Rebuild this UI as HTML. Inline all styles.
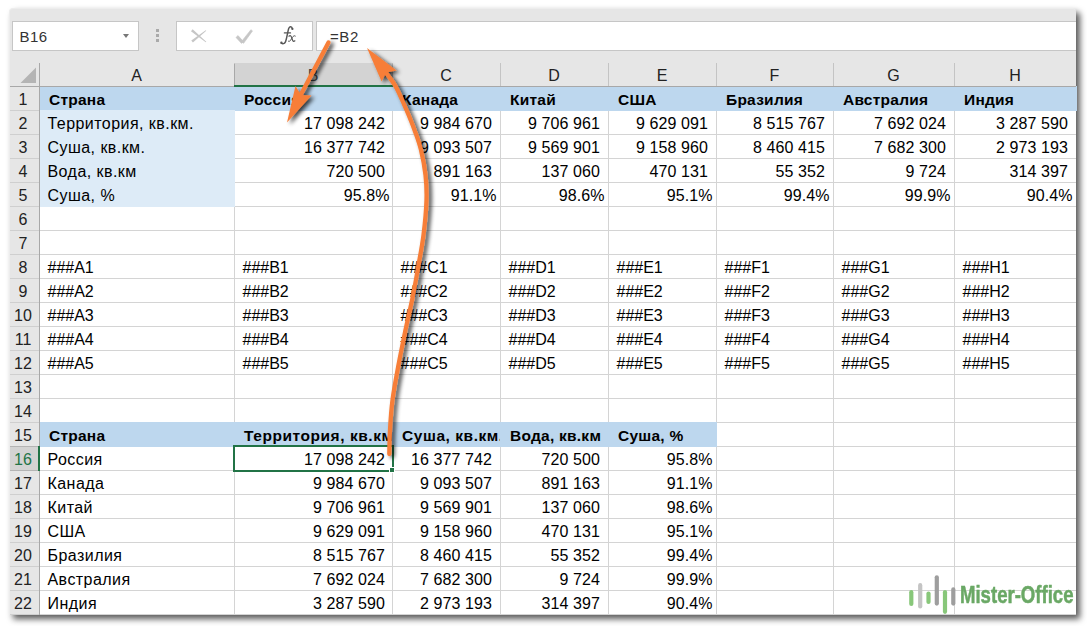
<!DOCTYPE html>
<html><head><meta charset="utf-8"><style>
html,body{margin:0;padding:0}
body{width:1087px;height:626px;background:#fff;position:relative;overflow:hidden;font-family:"Liberation Sans", sans-serif}
.a{position:absolute}
.t{position:absolute;white-space:nowrap;overflow:hidden;font-size:16px;line-height:24px;color:#000}
.b{font-weight:bold;font-size:15.5px;letter-spacing:0.25px}
.r{text-align:right}
</style></head><body>

<div class="a" style="left:9px;top:8px;width:1066px;height:606px;background:#e6e6e6;border-left:1px solid #ededed;border-top:1px solid #ededed;border-radius:4px 4px 0 0;box-shadow:4px 4px 6px rgba(0,0,0,0.65)"></div>
<div class="a" style="left:12px;top:21px;width:125px;height:28px;background:#fff;border:1px solid #c6c6c6"></div>
<div class="t" style="left:19.5px;top:24.6px;font-size:15px;letter-spacing:0.5px;color:#333">B16</div>
<div class="a" style="left:123px;top:34px;width:0;height:0;border-left:3.6px solid transparent;border-right:3.6px solid transparent;border-top:4.2px solid #777"></div>
<div class="a" style="left:156px;top:29px;width:3px;height:3px;background:#aaa"></div>
<div class="a" style="left:156px;top:34px;width:3px;height:3px;background:#aaa"></div>
<div class="a" style="left:156px;top:39px;width:3px;height:3px;background:#aaa"></div>
<div class="a" style="left:176px;top:21px;width:135px;height:28px;background:#fff;border:1px solid #c6c6c6"></div>
<svg class="a" style="left:0;top:0" width="300" height="60"><path d="M190.97 31.30 L205.71 42.35 L206.29 41.65 L192.63 29.30 Z M192.91 42.52 L206.28 30.85 L205.72 30.15 L191.29 40.48 Z" fill="#c6c6c6"/><path d="M235.97 37.45 L241.54 43.38 L243.46 41.62 L238.03 35.55 Z M243.62 43.34 L252.50 30.90 L250.90 29.70 L241.38 41.66 Z" fill="#c6c6c6" stroke="#c6c6c6" stroke-width="0.6" stroke-linejoin="round"/></svg>
<svg class="a" style="left:0;top:0" width="320" height="60"><g fill="none" stroke="#575757" stroke-linecap="round"><path d="M292.3 28.6 C291.8 26.4 289.8 26.2 288.8 28.3 C287.9 30.4 286.6 39.5 285.3 42.2 C284.5 43.8 282.6 44.1 281.6 43.2" stroke-width="1.5"/><path d="M284.3 32.9 L290.6 32.9" stroke-width="1.1"/><path d="M288.9 36.2 C290.2 35.1 291 35.6 291.6 37.4 L292.6 40.2 C293.1 41.6 293.9 41.7 294.9 40.8" stroke-width="1.2"/><path d="M295.3 36 C294.4 35.3 293.4 35.8 292.3 37.6 L290.6 40.2 C290 41.3 289.3 41.6 288.4 41.2" stroke-width="1.0"/></g><circle cx="292.4" cy="28.9" r="1.1" fill="#575757"/><circle cx="281.4" cy="42.8" r="1.2" fill="#575757"/></svg>
<div class="a" style="left:316px;top:21px;width:759px;height:28px;background:#fff;border:1px solid #c6c6c6;border-right:none"></div>
<div class="t" style="left:330px;top:24.6px;font-size:15px;letter-spacing:0.6px;color:#333">=B2</div>
<div class="a" style="left:10px;top:63px;width:1066px;height:24px;background:#e6e6e6"></div>
<div class="a" style="left:39px;top:87px;width:1037px;height:528px;background:#fff"></div>
<svg class="a" style="left:0;top:0" width="1087" height="626">
<line x1="39" x2="1076" y1="110.5" y2="110.5" stroke="#d4d4d4" stroke-width="1"/>
<line x1="39" x2="1076" y1="134.5" y2="134.5" stroke="#d4d4d4" stroke-width="1"/>
<line x1="39" x2="1076" y1="158.5" y2="158.5" stroke="#d4d4d4" stroke-width="1"/>
<line x1="39" x2="1076" y1="182.5" y2="182.5" stroke="#d4d4d4" stroke-width="1"/>
<line x1="39" x2="1076" y1="206.5" y2="206.5" stroke="#d4d4d4" stroke-width="1"/>
<line x1="39" x2="1076" y1="230.5" y2="230.5" stroke="#d4d4d4" stroke-width="1"/>
<line x1="39" x2="1076" y1="254.5" y2="254.5" stroke="#d4d4d4" stroke-width="1"/>
<line x1="39" x2="1076" y1="278.5" y2="278.5" stroke="#d4d4d4" stroke-width="1"/>
<line x1="39" x2="1076" y1="302.5" y2="302.5" stroke="#d4d4d4" stroke-width="1"/>
<line x1="39" x2="1076" y1="326.5" y2="326.5" stroke="#d4d4d4" stroke-width="1"/>
<line x1="39" x2="1076" y1="350.5" y2="350.5" stroke="#d4d4d4" stroke-width="1"/>
<line x1="39" x2="1076" y1="374.5" y2="374.5" stroke="#d4d4d4" stroke-width="1"/>
<line x1="39" x2="1076" y1="398.5" y2="398.5" stroke="#d4d4d4" stroke-width="1"/>
<line x1="39" x2="1076" y1="422.5" y2="422.5" stroke="#d4d4d4" stroke-width="1"/>
<line x1="39" x2="1076" y1="446.5" y2="446.5" stroke="#d4d4d4" stroke-width="1"/>
<line x1="39" x2="1076" y1="470.5" y2="470.5" stroke="#d4d4d4" stroke-width="1"/>
<line x1="39" x2="1076" y1="494.5" y2="494.5" stroke="#d4d4d4" stroke-width="1"/>
<line x1="39" x2="1076" y1="518.5" y2="518.5" stroke="#d4d4d4" stroke-width="1"/>
<line x1="39" x2="1076" y1="542.5" y2="542.5" stroke="#d4d4d4" stroke-width="1"/>
<line x1="39" x2="1076" y1="566.5" y2="566.5" stroke="#d4d4d4" stroke-width="1"/>
<line x1="39" x2="1076" y1="590.5" y2="590.5" stroke="#d4d4d4" stroke-width="1"/>
<line x1="39" x2="1076" y1="614.5" y2="614.5" stroke="#d4d4d4" stroke-width="1"/>
<line x1="234.5" x2="234.5" y1="87" y2="615" stroke="#d4d4d4" stroke-width="1"/>
<line x1="392.5" x2="392.5" y1="87" y2="615" stroke="#d4d4d4" stroke-width="1"/>
<line x1="500.5" x2="500.5" y1="87" y2="615" stroke="#d4d4d4" stroke-width="1"/>
<line x1="608.5" x2="608.5" y1="87" y2="615" stroke="#d4d4d4" stroke-width="1"/>
<line x1="716.5" x2="716.5" y1="87" y2="615" stroke="#d4d4d4" stroke-width="1"/>
<line x1="833.5" x2="833.5" y1="87" y2="615" stroke="#d4d4d4" stroke-width="1"/>
<line x1="954.5" x2="954.5" y1="87" y2="615" stroke="#d4d4d4" stroke-width="1"/>
<rect x="40" y="86" width="1037" height="25" fill="#bdd7ee"/>
<rect x="40" y="110" width="195" height="97" fill="#ddebf7"/>
<rect x="40" y="422" width="677" height="25" fill="#bdd7ee"/>
<rect x="10" y="87" width="29" height="528" fill="#e6e6e6"/>
<line x1="10" x2="39" y1="110.5" y2="110.5" stroke="#cfcfcf" stroke-width="1"/>
<line x1="10" x2="39" y1="134.5" y2="134.5" stroke="#cfcfcf" stroke-width="1"/>
<line x1="10" x2="39" y1="158.5" y2="158.5" stroke="#cfcfcf" stroke-width="1"/>
<line x1="10" x2="39" y1="182.5" y2="182.5" stroke="#cfcfcf" stroke-width="1"/>
<line x1="10" x2="39" y1="206.5" y2="206.5" stroke="#cfcfcf" stroke-width="1"/>
<line x1="10" x2="39" y1="230.5" y2="230.5" stroke="#cfcfcf" stroke-width="1"/>
<line x1="10" x2="39" y1="254.5" y2="254.5" stroke="#cfcfcf" stroke-width="1"/>
<line x1="10" x2="39" y1="278.5" y2="278.5" stroke="#cfcfcf" stroke-width="1"/>
<line x1="10" x2="39" y1="302.5" y2="302.5" stroke="#cfcfcf" stroke-width="1"/>
<line x1="10" x2="39" y1="326.5" y2="326.5" stroke="#cfcfcf" stroke-width="1"/>
<line x1="10" x2="39" y1="350.5" y2="350.5" stroke="#cfcfcf" stroke-width="1"/>
<line x1="10" x2="39" y1="374.5" y2="374.5" stroke="#cfcfcf" stroke-width="1"/>
<line x1="10" x2="39" y1="398.5" y2="398.5" stroke="#cfcfcf" stroke-width="1"/>
<line x1="10" x2="39" y1="422.5" y2="422.5" stroke="#cfcfcf" stroke-width="1"/>
<line x1="10" x2="39" y1="446.5" y2="446.5" stroke="#cfcfcf" stroke-width="1"/>
<line x1="10" x2="39" y1="470.5" y2="470.5" stroke="#cfcfcf" stroke-width="1"/>
<line x1="10" x2="39" y1="494.5" y2="494.5" stroke="#cfcfcf" stroke-width="1"/>
<line x1="10" x2="39" y1="518.5" y2="518.5" stroke="#cfcfcf" stroke-width="1"/>
<line x1="10" x2="39" y1="542.5" y2="542.5" stroke="#cfcfcf" stroke-width="1"/>
<line x1="10" x2="39" y1="566.5" y2="566.5" stroke="#cfcfcf" stroke-width="1"/>
<line x1="10" x2="39" y1="590.5" y2="590.5" stroke="#cfcfcf" stroke-width="1"/>
<line x1="10" x2="39" y1="614.5" y2="614.5" stroke="#cfcfcf" stroke-width="1"/>
<line x1="39.5" x2="39.5" y1="63" y2="615" stroke="#a8a8a8" stroke-width="1"/>
<line x1="234.5" x2="234.5" y1="63" y2="86" stroke="#c4c4c4" stroke-width="1"/>
<line x1="392.5" x2="392.5" y1="63" y2="86" stroke="#c4c4c4" stroke-width="1"/>
<line x1="500.5" x2="500.5" y1="63" y2="86" stroke="#c4c4c4" stroke-width="1"/>
<line x1="608.5" x2="608.5" y1="63" y2="86" stroke="#c4c4c4" stroke-width="1"/>
<line x1="716.5" x2="716.5" y1="63" y2="86" stroke="#c4c4c4" stroke-width="1"/>
<line x1="833.5" x2="833.5" y1="63" y2="86" stroke="#c4c4c4" stroke-width="1"/>
<line x1="954.5" x2="954.5" y1="63" y2="86" stroke="#c4c4c4" stroke-width="1"/>
<line x1="10" x2="1076" y1="86.5" y2="86.5" stroke="#a8a8a8" stroke-width="1"/>
<rect x="235" y="63" width="157" height="23" fill="#d3d3d3"/>
<rect x="234" y="64" width="1" height="21" fill="#a8a8a8"/>
<rect x="392" y="64" width="1" height="21" fill="#b4b4b4"/>
<rect x="234" y="85" width="159" height="2" fill="#217346"/>
<rect x="10" y="447" width="28" height="23" fill="#d3d3d3"/>
<line x1="10" x2="39" y1="446.5" y2="446.5" stroke="#b4b4b4" stroke-width="1"/>
<line x1="10" x2="39" y1="470.5" y2="470.5" stroke="#b4b4b4" stroke-width="1"/>
<rect x="38" y="446" width="2" height="25" fill="#217346"/>
<path d="M20.5 83L36 83L36 67.5Z" fill="#b4b4b4"/>
<rect x="234" y="446" width="159" height="25" fill="none" stroke="#217346" stroke-width="2"/>
<rect x="389.5" y="467.5" width="5" height="5" fill="#217346" stroke="#fff" stroke-width="1"/>
</svg>
<div class="t" style="left:39px;top:63.5px;width:195px;text-align:center;font-size:16px;color:#222">A</div>
<div class="t" style="left:234px;top:63.5px;width:158px;text-align:center;font-size:16px;color:#444">B</div>
<div class="t" style="left:392px;top:63.5px;width:108px;text-align:center;font-size:16px;color:#222">C</div>
<div class="t" style="left:500px;top:63.5px;width:108px;text-align:center;font-size:16px;color:#222">D</div>
<div class="t" style="left:608px;top:63.5px;width:108px;text-align:center;font-size:16px;color:#222">E</div>
<div class="t" style="left:716px;top:63.5px;width:117px;text-align:center;font-size:16px;color:#222">F</div>
<div class="t" style="left:833px;top:63.5px;width:121px;text-align:center;font-size:16px;color:#222">G</div>
<div class="t" style="left:954px;top:63.5px;width:122px;text-align:center;font-size:16px;color:#222">H</div>
<div class="t" style="left:8px;top:88.2px;width:30px;text-align:center;font-size:16px;color:#222">1</div>
<div class="t" style="left:8px;top:112.2px;width:30px;text-align:center;font-size:16px;color:#222">2</div>
<div class="t" style="left:8px;top:136.2px;width:30px;text-align:center;font-size:16px;color:#222">3</div>
<div class="t" style="left:8px;top:160.2px;width:30px;text-align:center;font-size:16px;color:#222">4</div>
<div class="t" style="left:8px;top:184.2px;width:30px;text-align:center;font-size:16px;color:#222">5</div>
<div class="t" style="left:8px;top:208.2px;width:30px;text-align:center;font-size:16px;color:#222">6</div>
<div class="t" style="left:8px;top:232.2px;width:30px;text-align:center;font-size:16px;color:#222">7</div>
<div class="t" style="left:8px;top:256.2px;width:30px;text-align:center;font-size:16px;color:#222">8</div>
<div class="t" style="left:8px;top:280.2px;width:30px;text-align:center;font-size:16px;color:#222">9</div>
<div class="t" style="left:8px;top:304.2px;width:30px;text-align:center;font-size:16px;color:#222">10</div>
<div class="t" style="left:8px;top:328.2px;width:30px;text-align:center;font-size:16px;color:#222">11</div>
<div class="t" style="left:8px;top:352.2px;width:30px;text-align:center;font-size:16px;color:#222">12</div>
<div class="t" style="left:8px;top:376.2px;width:30px;text-align:center;font-size:16px;color:#222">13</div>
<div class="t" style="left:8px;top:400.2px;width:30px;text-align:center;font-size:16px;color:#222">14</div>
<div class="t" style="left:8px;top:424.2px;width:30px;text-align:center;font-size:16px;color:#222">15</div>
<div class="t" style="left:8px;top:448.2px;width:30px;text-align:center;font-size:16px;color:#217346">16</div>
<div class="t" style="left:8px;top:472.2px;width:30px;text-align:center;font-size:16px;color:#222">17</div>
<div class="t" style="left:8px;top:496.2px;width:30px;text-align:center;font-size:16px;color:#222">18</div>
<div class="t" style="left:8px;top:520.2px;width:30px;text-align:center;font-size:16px;color:#222">19</div>
<div class="t" style="left:8px;top:544.2px;width:30px;text-align:center;font-size:16px;color:#222">20</div>
<div class="t" style="left:8px;top:568.2px;width:30px;text-align:center;font-size:16px;color:#222">21</div>
<div class="t" style="left:8px;top:592.2px;width:30px;text-align:center;font-size:16px;color:#222">22</div>
<div class="t b" style="left:39px;top:87.7px;width:195px;padding-left:10px;box-sizing:border-box;">Страна</div>
<div class="t b" style="left:234px;top:87.7px;width:158px;padding-left:10px;box-sizing:border-box;">Россия</div>
<div class="t b" style="left:392px;top:87.7px;width:108px;padding-left:10px;box-sizing:border-box;">Канада</div>
<div class="t b" style="left:500px;top:87.7px;width:108px;padding-left:10px;box-sizing:border-box;">Китай</div>
<div class="t b" style="left:608px;top:87.7px;width:108px;padding-left:10px;box-sizing:border-box;">США</div>
<div class="t b" style="left:716px;top:87.7px;width:117px;padding-left:10px;box-sizing:border-box;">Бразилия</div>
<div class="t b" style="left:833px;top:87.7px;width:121px;padding-left:10px;box-sizing:border-box;">Австралия</div>
<div class="t b" style="left:954px;top:87.7px;width:400px;padding-left:10px;box-sizing:border-box;">Индия</div>
<div class="t" style="left:39px;top:112.2px;width:195px;padding-left:8.5px;box-sizing:border-box;letter-spacing:0.45px;">Территория, кв.км.</div>
<div class="t r" style="left:234px;top:112.2px;width:151.0px;letter-spacing:0.1px">17 098 242</div>
<div class="t r" style="left:392px;top:112.2px;width:100.0px;letter-spacing:0.1px">9 984 670</div>
<div class="t r" style="left:500px;top:112.2px;width:100.0px;letter-spacing:0.1px">9 706 961</div>
<div class="t r" style="left:608px;top:112.2px;width:100.0px;letter-spacing:0.1px">9 629 091</div>
<div class="t r" style="left:716px;top:112.2px;width:109.0px;letter-spacing:0.1px">8 515 767</div>
<div class="t r" style="left:833px;top:112.2px;width:113.0px;letter-spacing:0.1px">7 692 024</div>
<div class="t r" style="left:954px;top:112.2px;width:114.0px;letter-spacing:0.1px">3 287 590</div>
<div class="t" style="left:39px;top:136.2px;width:195px;padding-left:8.5px;box-sizing:border-box;letter-spacing:0.45px;">Суша, кв.км.</div>
<div class="t r" style="left:234px;top:136.2px;width:151.0px;letter-spacing:0.1px">16 377 742</div>
<div class="t r" style="left:392px;top:136.2px;width:100.0px;letter-spacing:0.1px">9 093 507</div>
<div class="t r" style="left:500px;top:136.2px;width:100.0px;letter-spacing:0.1px">9 569 901</div>
<div class="t r" style="left:608px;top:136.2px;width:100.0px;letter-spacing:0.1px">9 158 960</div>
<div class="t r" style="left:716px;top:136.2px;width:109.0px;letter-spacing:0.1px">8 460 415</div>
<div class="t r" style="left:833px;top:136.2px;width:113.0px;letter-spacing:0.1px">7 682 300</div>
<div class="t r" style="left:954px;top:136.2px;width:114.0px;letter-spacing:0.1px">2 973 193</div>
<div class="t" style="left:39px;top:160.2px;width:195px;padding-left:8.5px;box-sizing:border-box;letter-spacing:0.45px;">Вода, кв.км</div>
<div class="t r" style="left:234px;top:160.2px;width:151.0px;letter-spacing:0.1px">720 500</div>
<div class="t r" style="left:392px;top:160.2px;width:100.0px;letter-spacing:0.1px">891 163</div>
<div class="t r" style="left:500px;top:160.2px;width:100.0px;letter-spacing:0.1px">137 060</div>
<div class="t r" style="left:608px;top:160.2px;width:100.0px;letter-spacing:0.1px">470 131</div>
<div class="t r" style="left:716px;top:160.2px;width:109.0px;letter-spacing:0.1px">55 352</div>
<div class="t r" style="left:833px;top:160.2px;width:113.0px;letter-spacing:0.1px">9 724</div>
<div class="t r" style="left:954px;top:160.2px;width:114.0px;letter-spacing:0.1px">314 397</div>
<div class="t" style="left:39px;top:184.2px;width:195px;padding-left:8.5px;box-sizing:border-box;letter-spacing:0.45px;">Суша, %</div>
<div class="t r" style="left:234px;top:184.2px;width:155.7px;letter-spacing:0.1px">95.8%</div>
<div class="t r" style="left:392px;top:184.2px;width:104.7px;letter-spacing:0.1px">91.1%</div>
<div class="t r" style="left:500px;top:184.2px;width:104.7px;letter-spacing:0.1px">98.6%</div>
<div class="t r" style="left:608px;top:184.2px;width:104.7px;letter-spacing:0.1px">95.1%</div>
<div class="t r" style="left:716px;top:184.2px;width:113.7px;letter-spacing:0.1px">99.4%</div>
<div class="t r" style="left:833px;top:184.2px;width:117.7px;letter-spacing:0.1px">99.9%</div>
<div class="t r" style="left:954px;top:184.2px;width:118.7px;letter-spacing:0.1px">90.4%</div>
<div class="t" style="left:39px;top:256.2px;width:195px;padding-left:8.5px;box-sizing:border-box;letter-spacing:0px;">###A1</div>
<div class="t" style="left:234px;top:256.2px;width:158px;padding-left:8.5px;box-sizing:border-box;letter-spacing:0px;">###B1</div>
<div class="t" style="left:392px;top:256.2px;width:108px;padding-left:8.5px;box-sizing:border-box;letter-spacing:0px;">###C1</div>
<div class="t" style="left:500px;top:256.2px;width:108px;padding-left:8.5px;box-sizing:border-box;letter-spacing:0px;">###D1</div>
<div class="t" style="left:608px;top:256.2px;width:108px;padding-left:8.5px;box-sizing:border-box;letter-spacing:0px;">###E1</div>
<div class="t" style="left:716px;top:256.2px;width:117px;padding-left:8.5px;box-sizing:border-box;letter-spacing:0px;">###F1</div>
<div class="t" style="left:833px;top:256.2px;width:121px;padding-left:8.5px;box-sizing:border-box;letter-spacing:0px;">###G1</div>
<div class="t" style="left:954px;top:256.2px;width:400px;padding-left:8.5px;box-sizing:border-box;letter-spacing:0px;">###H1</div>
<div class="t" style="left:39px;top:280.2px;width:195px;padding-left:8.5px;box-sizing:border-box;letter-spacing:0px;">###A2</div>
<div class="t" style="left:234px;top:280.2px;width:158px;padding-left:8.5px;box-sizing:border-box;letter-spacing:0px;">###B2</div>
<div class="t" style="left:392px;top:280.2px;width:108px;padding-left:8.5px;box-sizing:border-box;letter-spacing:0px;">###C2</div>
<div class="t" style="left:500px;top:280.2px;width:108px;padding-left:8.5px;box-sizing:border-box;letter-spacing:0px;">###D2</div>
<div class="t" style="left:608px;top:280.2px;width:108px;padding-left:8.5px;box-sizing:border-box;letter-spacing:0px;">###E2</div>
<div class="t" style="left:716px;top:280.2px;width:117px;padding-left:8.5px;box-sizing:border-box;letter-spacing:0px;">###F2</div>
<div class="t" style="left:833px;top:280.2px;width:121px;padding-left:8.5px;box-sizing:border-box;letter-spacing:0px;">###G2</div>
<div class="t" style="left:954px;top:280.2px;width:400px;padding-left:8.5px;box-sizing:border-box;letter-spacing:0px;">###H2</div>
<div class="t" style="left:39px;top:304.2px;width:195px;padding-left:8.5px;box-sizing:border-box;letter-spacing:0px;">###A3</div>
<div class="t" style="left:234px;top:304.2px;width:158px;padding-left:8.5px;box-sizing:border-box;letter-spacing:0px;">###B3</div>
<div class="t" style="left:392px;top:304.2px;width:108px;padding-left:8.5px;box-sizing:border-box;letter-spacing:0px;">###C3</div>
<div class="t" style="left:500px;top:304.2px;width:108px;padding-left:8.5px;box-sizing:border-box;letter-spacing:0px;">###D3</div>
<div class="t" style="left:608px;top:304.2px;width:108px;padding-left:8.5px;box-sizing:border-box;letter-spacing:0px;">###E3</div>
<div class="t" style="left:716px;top:304.2px;width:117px;padding-left:8.5px;box-sizing:border-box;letter-spacing:0px;">###F3</div>
<div class="t" style="left:833px;top:304.2px;width:121px;padding-left:8.5px;box-sizing:border-box;letter-spacing:0px;">###G3</div>
<div class="t" style="left:954px;top:304.2px;width:400px;padding-left:8.5px;box-sizing:border-box;letter-spacing:0px;">###H3</div>
<div class="t" style="left:39px;top:328.2px;width:195px;padding-left:8.5px;box-sizing:border-box;letter-spacing:0px;">###A4</div>
<div class="t" style="left:234px;top:328.2px;width:158px;padding-left:8.5px;box-sizing:border-box;letter-spacing:0px;">###B4</div>
<div class="t" style="left:392px;top:328.2px;width:108px;padding-left:8.5px;box-sizing:border-box;letter-spacing:0px;">###C4</div>
<div class="t" style="left:500px;top:328.2px;width:108px;padding-left:8.5px;box-sizing:border-box;letter-spacing:0px;">###D4</div>
<div class="t" style="left:608px;top:328.2px;width:108px;padding-left:8.5px;box-sizing:border-box;letter-spacing:0px;">###E4</div>
<div class="t" style="left:716px;top:328.2px;width:117px;padding-left:8.5px;box-sizing:border-box;letter-spacing:0px;">###F4</div>
<div class="t" style="left:833px;top:328.2px;width:121px;padding-left:8.5px;box-sizing:border-box;letter-spacing:0px;">###G4</div>
<div class="t" style="left:954px;top:328.2px;width:400px;padding-left:8.5px;box-sizing:border-box;letter-spacing:0px;">###H4</div>
<div class="t" style="left:39px;top:352.2px;width:195px;padding-left:8.5px;box-sizing:border-box;letter-spacing:0px;">###A5</div>
<div class="t" style="left:234px;top:352.2px;width:158px;padding-left:8.5px;box-sizing:border-box;letter-spacing:0px;">###B5</div>
<div class="t" style="left:392px;top:352.2px;width:108px;padding-left:8.5px;box-sizing:border-box;letter-spacing:0px;">###C5</div>
<div class="t" style="left:500px;top:352.2px;width:108px;padding-left:8.5px;box-sizing:border-box;letter-spacing:0px;">###D5</div>
<div class="t" style="left:608px;top:352.2px;width:108px;padding-left:8.5px;box-sizing:border-box;letter-spacing:0px;">###E5</div>
<div class="t" style="left:716px;top:352.2px;width:117px;padding-left:8.5px;box-sizing:border-box;letter-spacing:0px;">###F5</div>
<div class="t" style="left:833px;top:352.2px;width:121px;padding-left:8.5px;box-sizing:border-box;letter-spacing:0px;">###G5</div>
<div class="t" style="left:954px;top:352.2px;width:400px;padding-left:8.5px;box-sizing:border-box;letter-spacing:0px;">###H5</div>
<div class="t b" style="left:39px;top:423.7px;width:195px;padding-left:10px;box-sizing:border-box;">Страна</div>
<div class="t b" style="left:234px;top:423.7px;width:158px;padding-left:10px;box-sizing:border-box;letter-spacing:0.55px;">Территория, кв.км</div>
<div class="t b" style="left:392px;top:423.7px;width:108px;padding-left:10px;box-sizing:border-box;letter-spacing:0.55px;">Суша, кв.км.</div>
<div class="t b" style="left:500px;top:423.7px;width:108px;padding-left:10px;box-sizing:border-box;">Вода, кв.км</div>
<div class="t b" style="left:608px;top:423.7px;width:400px;padding-left:10px;box-sizing:border-box;">Суша, %</div>
<div class="t" style="left:39px;top:448.2px;width:195px;padding-left:8.5px;box-sizing:border-box;letter-spacing:0.45px;">Россия</div>
<div class="t r" style="left:234px;top:448.2px;width:151.0px;letter-spacing:0.1px">17 098 242</div>
<div class="t r" style="left:392px;top:448.2px;width:100.0px;letter-spacing:0.1px">16 377 742</div>
<div class="t r" style="left:500px;top:448.2px;width:100.0px;letter-spacing:0.1px">720 500</div>
<div class="t r" style="left:608px;top:448.2px;width:104.7px;letter-spacing:0.1px">95.8%</div>
<div class="t" style="left:39px;top:472.2px;width:195px;padding-left:8.5px;box-sizing:border-box;letter-spacing:0.45px;">Канада</div>
<div class="t r" style="left:234px;top:472.2px;width:151.0px;letter-spacing:0.1px">9 984 670</div>
<div class="t r" style="left:392px;top:472.2px;width:100.0px;letter-spacing:0.1px">9 093 507</div>
<div class="t r" style="left:500px;top:472.2px;width:100.0px;letter-spacing:0.1px">891 163</div>
<div class="t r" style="left:608px;top:472.2px;width:104.7px;letter-spacing:0.1px">91.1%</div>
<div class="t" style="left:39px;top:496.2px;width:195px;padding-left:8.5px;box-sizing:border-box;letter-spacing:0.45px;">Китай</div>
<div class="t r" style="left:234px;top:496.2px;width:151.0px;letter-spacing:0.1px">9 706 961</div>
<div class="t r" style="left:392px;top:496.2px;width:100.0px;letter-spacing:0.1px">9 569 901</div>
<div class="t r" style="left:500px;top:496.2px;width:100.0px;letter-spacing:0.1px">137 060</div>
<div class="t r" style="left:608px;top:496.2px;width:104.7px;letter-spacing:0.1px">98.6%</div>
<div class="t" style="left:39px;top:520.2px;width:195px;padding-left:8.5px;box-sizing:border-box;letter-spacing:0.45px;">США</div>
<div class="t r" style="left:234px;top:520.2px;width:151.0px;letter-spacing:0.1px">9 629 091</div>
<div class="t r" style="left:392px;top:520.2px;width:100.0px;letter-spacing:0.1px">9 158 960</div>
<div class="t r" style="left:500px;top:520.2px;width:100.0px;letter-spacing:0.1px">470 131</div>
<div class="t r" style="left:608px;top:520.2px;width:104.7px;letter-spacing:0.1px">95.1%</div>
<div class="t" style="left:39px;top:544.2px;width:195px;padding-left:8.5px;box-sizing:border-box;letter-spacing:0.45px;">Бразилия</div>
<div class="t r" style="left:234px;top:544.2px;width:151.0px;letter-spacing:0.1px">8 515 767</div>
<div class="t r" style="left:392px;top:544.2px;width:100.0px;letter-spacing:0.1px">8 460 415</div>
<div class="t r" style="left:500px;top:544.2px;width:100.0px;letter-spacing:0.1px">55 352</div>
<div class="t r" style="left:608px;top:544.2px;width:104.7px;letter-spacing:0.1px">99.4%</div>
<div class="t" style="left:39px;top:568.2px;width:195px;padding-left:8.5px;box-sizing:border-box;letter-spacing:0.45px;">Австралия</div>
<div class="t r" style="left:234px;top:568.2px;width:151.0px;letter-spacing:0.1px">7 692 024</div>
<div class="t r" style="left:392px;top:568.2px;width:100.0px;letter-spacing:0.1px">7 682 300</div>
<div class="t r" style="left:500px;top:568.2px;width:100.0px;letter-spacing:0.1px">9 724</div>
<div class="t r" style="left:608px;top:568.2px;width:104.7px;letter-spacing:0.1px">99.9%</div>
<div class="t" style="left:39px;top:592.2px;width:195px;padding-left:8.5px;box-sizing:border-box;letter-spacing:0.45px;">Индия</div>
<div class="t r" style="left:234px;top:592.2px;width:151.0px;letter-spacing:0.1px">3 287 590</div>
<div class="t r" style="left:392px;top:592.2px;width:100.0px;letter-spacing:0.1px">2 973 193</div>
<div class="t r" style="left:500px;top:592.2px;width:100.0px;letter-spacing:0.1px">314 397</div>
<div class="t r" style="left:608px;top:592.2px;width:104.7px;letter-spacing:0.1px">90.4%</div>
<svg class="a" style="left:0;top:0" width="1087" height="626"><defs><filter id="sh" x="-50%%" y="-50%%" width="200%%" height="200%%"><feGaussianBlur in="SourceAlpha" stdDeviation="2.2"/><feOffset dx="2.5" dy="2" result="o"/><feComponentTransfer><feFuncA type="linear" slope="0.75"/></feComponentTransfer><feMerge><feMergeNode/><feMergeNode in="SourceGraphic"/></feMerge></filter></defs><g filter="url(#sh)"><path d="M328.5 42.5 L298 100" stroke="#f77e38" stroke-width="4.3" fill="none" stroke-linecap="round"/><path d="M287 122.5 L295.5 86 L301 95 L311.5 95.5 Z" fill="#f77e38"/><path d="M389.3 454.0 C389.4 450.0 389.5 439.0 390.0 430.0 C390.5 421.0 391.1 410.8 392.5 400.0 C393.9 389.2 396.3 376.7 398.5 365.0 C400.7 353.3 403.2 341.2 405.5 330.0 C407.8 318.8 410.4 308.3 412.5 298.0 C414.6 287.7 416.2 278.5 418.0 268.0 C419.8 257.5 422.1 246.3 423.5 235.0 C424.9 223.7 426.2 210.0 426.5 200.0 C426.8 190.0 426.4 183.3 425.5 175.0 C424.6 166.7 422.8 157.5 421.0 150.0 C419.2 142.5 416.9 136.7 414.5 130.0 C412.1 123.3 409.5 117.0 406.5 110.0 C403.5 103.0 399.5 93.7 396.5 88.0 C393.5 82.3 390.8 79.2 388.5 76.0 C386.2 72.8 383.9 70.2 383.0 69.0" stroke="#f77e38" stroke-width="4.3" fill="none" stroke-linecap="round"/><path d="M367 48 L396.6 70.4 L386.2 72.4 L381.6 81.4 Z" fill="#f77e38"/></g></svg>
<svg class="a" style="left:0;top:0" width="1087" height="626"><line x1="911.3" x2="911.3" y1="592.2" y2="604" stroke="#88c77a" stroke-width="4.2" stroke-linecap="round"/><line x1="920.2" x2="920.2" y1="585.2" y2="606.4" stroke="#c4c4c4" stroke-width="4.2" stroke-linecap="round"/><line x1="928.5" x2="928.5" y1="593.5" y2="601.9" stroke="#88c77a" stroke-width="4.2" stroke-linecap="round"/><line x1="936.8" x2="936.8" y1="577.3" y2="603.6" stroke="#9e9e9e" stroke-width="4.2" stroke-linecap="round"/><line x1="945" x2="945" y1="592.2" y2="611.8" stroke="#88c77a" stroke-width="4.2" stroke-linecap="round"/><line x1="953.3" x2="953.3" y1="589.4" y2="603.6" stroke="#9e9e9e" stroke-width="4.2" stroke-linecap="round"/></svg>
<div class="a" style="left:959.5px;top:580px;font-family:'Liberation Sans',sans-serif;font-weight:bold;font-size:23.5px;line-height:30px;color:#6aa865;transform:scaleX(0.79);transform-origin:0 0;-webkit-text-stroke:0.5px #6aa865;white-space:nowrap">Mister-Office</div>
</body></html>
